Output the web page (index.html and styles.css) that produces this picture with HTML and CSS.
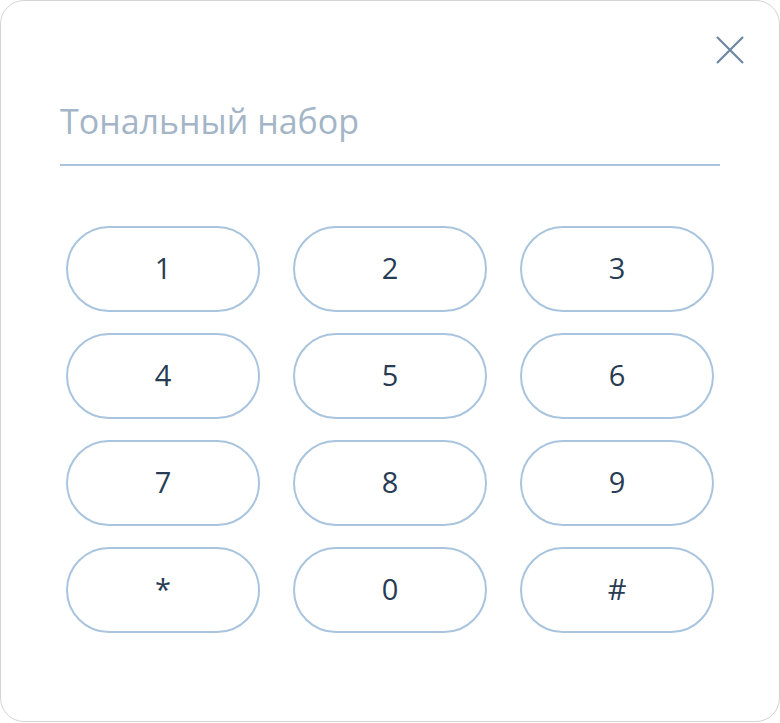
FILE: index.html
```html
<!DOCTYPE html>
<html lang="ru">
<head>
<meta charset="utf-8">
<title>Тональный набор</title>
<link rel="stylesheet" href="styles.css">
</head>
<body>
<div class="dialog">
  <button class="close" aria-label="Закрыть">
    <svg width="28" height="28" viewBox="0 0 28 28"><path d="M1 1L27 27M27 1L1 27" stroke="#6b87a1" stroke-width="2.2" fill="none"/></svg>
  </button>
  <div class="field">Тональный набор</div>
  <div class="keypad">
    <button class="key">1</button>
    <button class="key">2</button>
    <button class="key">3</button>
    <button class="key">4</button>
    <button class="key">5</button>
    <button class="key">6</button>
    <button class="key">7</button>
    <button class="key">8</button>
    <button class="key">9</button>
    <button class="key">*</button>
    <button class="key">0</button>
    <button class="key">#</button>
  </div>
</div>
</body>
</html>
```
FILE: styles.css
```css
html, body {
  margin: 0;
  padding: 0;
  background: #ffffff;
}

body {
  font-family: "Open Sans", "Noto Sans", sans-serif;
}

.dialog {
  position: relative;
  box-sizing: border-box;
  width: 780px;
  height: 722px;
  border: 1px solid #d4d4d4;
  border-radius: 24px;
  background: #fff;
  padding: 95px 59px 0 59px;
}

.close {
  position: absolute;
  top: 35px;
  right: 35px;
  width: 28px;
  height: 28px;
  padding: 0;
  border: 0;
  background: none;
  cursor: pointer;
}

.close svg {
  display: block;
}

/* input-like label with an underline */
.field {
  font-size: 34px;
  line-height: 50px;
  color: #a3b5c7;
  padding-bottom: 18px;
  border-bottom: 2px solid #a9c4de;
}

.keypad {
  display: grid;
  grid-template-columns: repeat(3, 194px);
  grid-auto-rows: 86px;
  column-gap: 33px;
  row-gap: 21px;
  margin-top: 60px;
  padding-left: 6px;
}

.key {
  box-sizing: border-box;
  border: 2px solid #a9c4de;
  border-radius: 43px;
  background: #fff;
  font-family: "Open Sans", "Noto Sans", sans-serif;
  font-size: 29px;
  color: #273b52;
  padding: 0 0 4px 0;
  cursor: pointer;
}
```
